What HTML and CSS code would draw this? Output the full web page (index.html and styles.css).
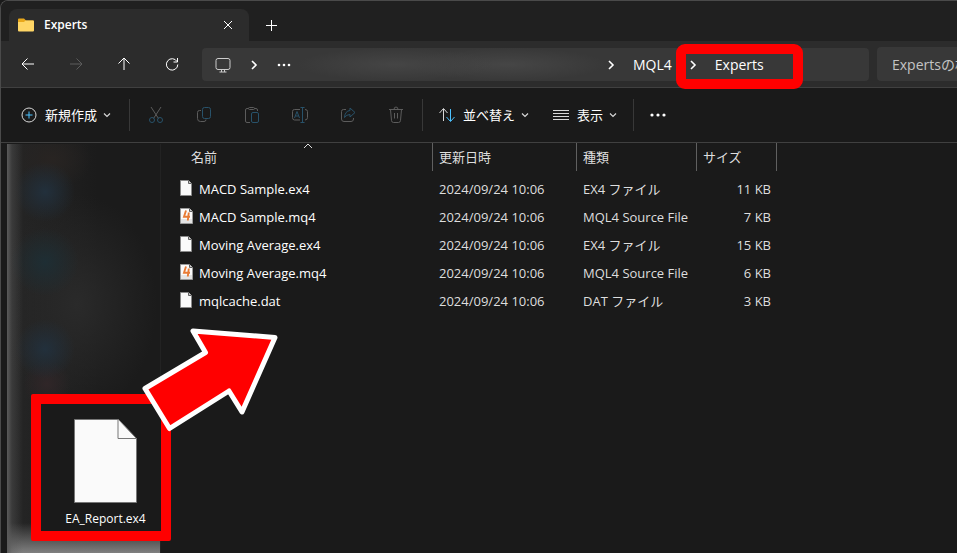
FILE: index.html
```html
<!DOCTYPE html>
<html lang="ja">
<head>
<meta charset="utf-8">
<title>Experts</title>
<link rel="stylesheet" href="styles.css">
</head>
<body>
<svg class="defs" aria-hidden="true">
  <symbol id="chevron" viewBox="0 0 8 8"><path d="M1 2.500l3 3 3-3" fill="none" stroke="currentColor" stroke-width="1.200"/></symbol>
  <symbol id="crumb" viewBox="0 0 8 12"><path d="M2 2l4 4-4 4" fill="none" stroke="currentColor" stroke-width="1.600"/></symbol>
  <symbol id="file" viewBox="0 0 14 16"><path d="M.5.5h8l3 3v12H.5z" fill="#fafafa" stroke="#8a8a8a"/><path d="M8.500 .5v3h3" fill="#ccc" stroke="#606060"/></symbol>
  <symbol id="mq4" viewBox="0 0 14 16"><path d="M.5.5h9l3 3v12H.5z" fill="#fafafa" stroke="#9a9a9a"/><path d="M1 11h11v4H1z" fill="#e4e4e4"/><path d="M9.500 .5v3h3" fill="#ccc" stroke="#606060"/><path d="M6 2.500L4 8.800H10M8.800 4.500L7.800 12.500" fill="none" stroke="#e87b35" stroke-width="1.900"/></symbol>
</svg>
<div class="window">
  <header class="tabs">
    <div class="tab">
      <svg class="folder" viewBox="0 0 16 14"><path d="M0 1.500Q0 .5 1 .5h5l2 2h7q1 0 1 1V8H0z" fill="#e9a81b"/><path d="M0 4h6l1.500-1.500H15q1 0 1 1v9q0 1-1 1H1q-1 0-1-1z" fill="#ffd666"/></svg>
      <span class="tab-title">Experts</span>
      <button class="icon-btn" aria-label="閉じる"><svg width="10" height="10" viewBox="0 0 10 10"><path d="M1 1l8 8M9 1L1 9"/></svg></button>
    </div>
    <button class="icon-btn add" aria-label="新しいタブ"><svg width="12" height="12" viewBox="0 0 12 12"><path d="M6.500 1v11M1 6.500h11"/></svg></button>
  </header>
  <nav class="nav">
    <div class="nav-buttons">
      <button class="icon-btn" aria-label="戻る"><svg width="14" height="14" viewBox="0 0 14 14"><path d="M13 7H1.500M6.500 1.500L1 7l5.500 5.500"/></svg></button>
      <button class="icon-btn" aria-label="進む" disabled><svg width="14" height="14" viewBox="0 0 14 14"><path d="M1 7h11.500M7.500 1.500L13 7l-5.500 5.500"/></svg></button>
      <button class="icon-btn" aria-label="上へ"><svg width="14" height="14" viewBox="0 0 14 14"><path d="M7 13V1.500M1.500 6.500L7 1l5.500 5.500"/></svg></button>
      <button class="icon-btn" aria-label="更新"><svg width="14" height="14" viewBox="0 0 14 14"><path d="M12 4.500A5.700 5.700 0 1 0 12.800 7.500M12.500 1v4H8.500"/></svg></button>
    </div>
    <div class="address">
      <svg class="pc" viewBox="0 0 16 16"><rect x="1" y="1.500" width="14" height="11" rx="2"/><path d="M4.500 15h7M6.500 12.500V15M9.500 12.500V15"/></svg>
      <svg class="sep"><use href="#crumb"/></svg>
      <button class="icon-btn" aria-label="その他の場所"><svg width="14" height="4" viewBox="0 0 14 4" class="dots"><circle cx="2" cy="2" r="1.300"/><circle cx="7" cy="2" r="1.300"/><circle cx="12" cy="2" r="1.300"/></svg></button>
      <span class="masked"></span>
      <svg class="sep"><use href="#crumb"/></svg>
      <a class="crumb" href="#mql4">MQL4</a>
      <span class="current"><svg class="sep"><use href="#crumb"/></svg><a class="crumb" href="#experts">Experts</a></span>
    </div>
    <input class="search" type="text" aria-label="検索" placeholder="Expertsの検索">
  </nav>
  <div class="tools">
    <button class="tool new"><svg width="16" height="16" viewBox="0 0 16 16"><circle cx="8" cy="8" r="7"/><path class="blue" d="M8 4.500v7M4.500 8h7"/></svg>新規作成<svg class="chev"><use href="#chevron"/></svg></button>
    <div class="group">
      <button class="icon-btn" aria-label="切り取り" disabled><svg width="16" height="18" viewBox="0 0 16 18"><path d="M3 1l7.500 11.500M13 1L5.500 12.500"/><circle class="blue" cx="4" cy="14" r="2.500"/><circle class="blue" cx="12" cy="14" r="2.500"/></svg></button>
      <button class="icon-btn" aria-label="コピー" disabled><svg width="16" height="18" viewBox="0 0 16 18"><path d="M5 4.500H3.500Q1.500 4.500 1.500 6.500v6q0 3 3 3H8q2 0 2-2"/><rect class="blue" x="6.500" y="1.500" width="8" height="11" rx="2"/></svg></button>
      <button class="icon-btn" aria-label="貼り付け" disabled><svg width="16" height="18" viewBox="0 0 16 18"><path d="M4.500 2.500H3Q1.500 2.500 1.500 4v11q0 1.500 1.500 1.500h3M10.500 2.500H12q1.500 0 1.500 1.500v1"/><rect x="4.500" y="1.500" width="6" height="2" rx="1"/><rect class="blue" x="7.500" y="6.500" width="7" height="10" rx="1.500"/></svg></button>
      <button class="icon-btn" aria-label="名前の変更" disabled><svg width="18" height="18" viewBox="0 0 18 18"><path d="M9 3.500H3.500Q1.500 3.500 1.500 5.500v6q0 2.500 2 2.500H9M14 3.500q2.500 0 2.500 2v6q0 2.500-2.500 2.500"/><path class="blue" d="M9.500 1.500h4M9.500 16.500h4M11.500 1.500v15M3.500 12L6 5.500 8.500 12M4.500 10h3"/></svg></button>
      <button class="icon-btn" aria-label="共有" disabled><svg width="16" height="18" viewBox="0 0 16 18"><path d="M6 3.500H3.500Q1.500 3.500 1.500 5.500v7.500q0 2.500 2.500 2.500h7q2.500 0 2.500-2.500v-1"/><path class="blue" d="M10 2l5 4.500-5 4.500V8.500Q6.500 8.500 4.500 11.500 5 5 10 4.500z"/></svg></button>
      <button class="icon-btn" aria-label="削除" disabled><svg width="16" height="18" viewBox="0 0 16 18"><path d="M1 3.500h14M6 3.500Q6 1 8 1t2 2.500M2.500 3.500l1 11q.2 2 2 2h5q1.800 0 2-2l1-11M6.500 7v5.500M9.500 7v5.500"/></svg></button>
    </div>
    <button class="tool sort"><svg width="16" height="16" viewBox="0 0 16 16"><path d="M4.500 14V2M.5 6l4-4.500 4 4.500"/><path class="blue" d="M11.500 2v12M7.500 10l4 4.500 4-4.500"/></svg>並べ替え<svg class="chev"><use href="#chevron"/></svg></button>
    <button class="tool view"><svg width="16" height="16" viewBox="0 0 16 16"><path d="M0 3.500h16M0 6.500h16M0 9.500h16M0 12.500h16"/></svg>表示<svg class="chev"><use href="#chevron"/></svg></button>
    <div class="more"><button class="icon-btn" aria-label="もっと見る"><svg width="18" height="4" viewBox="0 0 18 4" class="dots"><circle cx="3" cy="2" r="1.600"/><circle cx="9" cy="2" r="1.600"/><circle cx="15" cy="2" r="1.600"/></svg></button></div>
  </div>
  <main class="content">
    <aside class="side"></aside>
    <table class="files">
      <colgroup><col class="c-name"><col class="c-date"><col class="c-type"><col class="c-size"></colgroup>
      <thead><tr><th>名前<svg class="asc" viewBox="0 0 10 6"><path d="M1 5l4-4 4 4"/></svg></th><th>更新日時</th><th>種類</th><th>サイズ</th></tr></thead>
      <tbody>
        <tr><td><svg class="fi"><use href="#file"/></svg>MACD Sample.ex4</td><td>2024/09/24 10:06</td><td>EX4 ファイル</td><td>11 KB</td></tr>
        <tr><td><svg class="fi"><use href="#mq4"/></svg>MACD Sample.mq4</td><td>2024/09/24 10:06</td><td>MQL4 Source File</td><td>7 KB</td></tr>
        <tr><td><svg class="fi"><use href="#file"/></svg>Moving Average.ex4</td><td>2024/09/24 10:06</td><td>EX4 ファイル</td><td>15 KB</td></tr>
        <tr><td><svg class="fi"><use href="#mq4"/></svg>Moving Average.mq4</td><td>2024/09/24 10:06</td><td>MQL4 Source File</td><td>6 KB</td></tr>
        <tr><td><svg class="fi"><use href="#file"/></svg>mqlcache.dat</td><td>2024/09/24 10:06</td><td>DAT ファイル</td><td>3 KB</td></tr>
      </tbody>
    </table>
    <figure class="dragged">
      <svg viewBox="0 0 64 85" width="64" height="85"><path d="M.5.500h44l18 19v64H.5z" fill="#fafafa" stroke="#777"/><path d="M44 .5v19h18.500" fill="none" stroke="#777"/></svg>
      <figcaption>EA_Report.ex4</figcaption>
    </figure>
    <svg class="arrow" viewBox="0 0 140 110"><path d="M54 7L136 13.500 103 88 90 67 30.500 104.500 6 64.500 66.500 28.500z" fill="#f00" stroke="#fff" stroke-width="5" stroke-linejoin="round"/></svg>
  </main>
</div>
</body>
</html>
```
FILE: styles.css
```css
* { box-sizing: border-box; }
body {
  margin: 0;
  background: #1a1a1a;
  color: #fff;
  font: 13px/20px "Open Sans", "Noto Sans CJK JP", sans-serif;
}
button, input { font: inherit; color: inherit; }
button { background: none; border: 0; padding: 0; }
svg { flex: none; fill: none; stroke: currentColor; }
.defs { position: absolute; width: 0; height: 0; }
.window {
  display: flex;
  flex-direction: column;
  min-height: 100vh;
  overflow: hidden;
  border: solid #4a4a4a;
  border-width: 1px 0 0 1px;
  border-top-left-radius: 8px;
}
.icon-btn { display: flex; align-items: center; justify-content: center; }
.icon-btn:disabled { color: #5c5c5c; }
.dots { fill: currentColor; stroke: none; }
.blue { stroke: #4cc2ff; }
:disabled .blue { stroke: #28526a; }

.tabs { display: flex; align-items: flex-end; height: 40px; padding-left: 8px; background: #202020; }
.tab {
  display: flex;
  align-items: center;
  width: 240px;
  height: 32px;
  padding: 0 16px 0 9px;
  background: #2c2c2c;
  border-radius: 8px 8px 0 0;
}
.folder { width: 16px; height: 14px; stroke: none; }
.tab-title { flex: 1; margin-left: 10px; font-weight: 600; font-size: 12px; }
.add { width: 44px; height: 32px; }

.nav { display: flex; align-items: center; height: 47px; background: #2c2c2c; border-bottom: 1px solid #404040; }
.nav-buttons { display: flex; width: 201px; padding-left: 3px; }
.nav-buttons .icon-btn { width: 48px; height: 32px; }
.address {
  flex: 1;
  display: flex;
  align-items: center;
  min-width: 0;
  height: 33px;
  margin-top: 1px;
  padding-left: 13px;
  background: #383838;
  border-radius: 4px;
}
.pc { width: 16px; height: 16px; color: #ccc; }
.sep { width: 8px; height: 12px; }
.address > .pc + .sep { margin: 0 19px; }
.masked {
  flex: 0 1 310px;
  height: 33px;
  margin-left: 6px;
  background:
    radial-gradient(closest-side at 32% 50%, #454545, #38383800),
    radial-gradient(closest-side at 68% 50%, #464646, #38383800);
}
.crumb { color: inherit; text-decoration: none; font-size: 14px; }
.address > .crumb { margin-left: 18px; }
.current { position: relative; display: flex; align-items: center; gap: 18px; margin-left: 17px; }
.current::after {
  content: "";
  position: absolute;
  inset: -11px -39px -14px -13px;
  border: 10px solid #f00;
  border-radius: 9px;
}
.search {
  width: 80px;
  height: 34px;
  margin-left: 8px;
  padding: 0 0 0 15px;
  background: #383838;
  border: 0;
  border-radius: 4px 0 0 4px;
  font-size: 14px;
}
.search::placeholder { color: #c4c4c4; }

.tools { display: flex; align-items: center; height: 55px; border-bottom: 1px solid #404040; }
.tool { display: flex; align-items: center; height: 32px; gap: 8px; }
.tool svg { color: #d8d8d8; }
.tool .chev { width: 8px; height: 8px; margin-left: -2px; }
.new { width: 128px; padding-left: 20px; }
.group { display: flex; padding: 0 2px; border: solid #383838; border-width: 0 1px; }
.group .icon-btn { width: 48px; height: 32px; }
.sort { width: 130px; padding-left: 16px; }
.view { width: 80px; }
.more { border-left: 1px solid #383838; }
.more .icon-btn { width: 48px; height: 32px; }

.content { position: relative; flex: 1; display: flex; align-items: stretch; }
.side {
  width: 154px;
  margin: 1px 19px 0 6px;
  background:
    linear-gradient(90deg, #5a5a5a, #5a5a5a66 5px, #5a5a5a00 16px),
    linear-gradient(0deg, #808080, #80808000 30px),
    radial-gradient(30px 30px at 38px 48px, #22303c, #22303c00),
    radial-gradient(34px 34px at 38px 118px, #1e2e34, #1e2e3400),
    radial-gradient(30px 30px at 38px 205px, #22303c, #22303c00),
    radial-gradient(24px 24px at 40px 240px, #302628, #30262800),
    radial-gradient(40px 30px at 45px 15px, #282422, #28242200),
    radial-gradient(80px 110px at 70px 160px, #2a2a2a, #2a2a2a00),
    linear-gradient(90deg, #262626, #1b1b1b 90px);
  border-right: 1px solid #222;
}
.files { align-self: flex-start; width: 597px; border-collapse: separate; border-spacing: 0; table-layout: fixed; }
.c-name { width: 253px; }
.c-date { width: 144px; }
.c-type { width: 120px; }
.c-size { width: 80px; }
th { position: relative; height: 28px; padding: 0 6px; border-right: 1px solid #606060; font-weight: 400; text-align: left; color: #dedede; }
th:first-child { padding-left: 11px; }
td { height: 28px; padding: 0 6px; color: #dedede; white-space: nowrap; }
td:first-child { padding-left: 0; color: #fff; }
td:last-child { text-align: right; }
tbody::before { content: ""; display: block; height: 4px; }
.fi { width: 14px; height: 16px; margin-right: 5px; vertical-align: -2px; stroke: none; }
.asc { position: absolute; top: 0; left: 123px; width: 10px; height: 6px; }
.dragged {
  position: absolute;
  left: 30px;
  top: 251px;
  display: flex;
  flex-direction: column;
  align-items: center;
  gap: 5px;
  width: 140px;
  height: 147px;
  margin: 0;
  padding: 15px 0 0 9px;
  background: #1a1a1a;
  border: 10px solid #f00;
  border-radius: 2px;
  font-size: 12px;
}
.arrow { position: absolute; left: 138px; top: 181px; width: 140px; height: 110px; }
```
